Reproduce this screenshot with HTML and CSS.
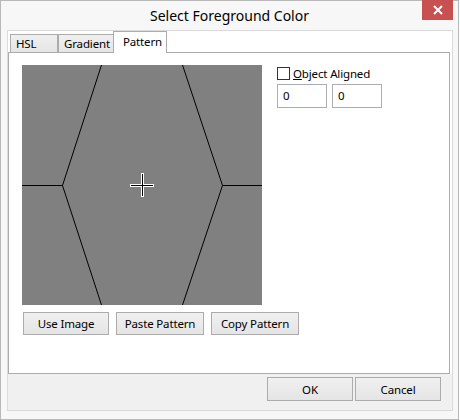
FILE: index.html
```html
<!DOCTYPE html>
<html>
<head>
<meta charset="utf-8">
<link rel="stylesheet" href="styles.css">
</head>
<body>
<div class="window">
  <div class="titlebar">
    <div class="title">Select Foreground Color</div>
    <div class="close">
      <svg width="10" height="10" viewBox="0 0 10 10"><path d="M1 1 L9 9 M9 1 L1 9" stroke="#fff" stroke-width="2" fill="none"/></svg>
    </div>
  </div>
  <div class="client">
    <div class="tabarea">
      <div class="tabs">
        <div class="tab tab-hsl">HSL</div>
        <div class="tab tab-gradient">Gradient</div>
        <div class="tab tab-active">Pattern</div>
      </div>
      <div class="panel">
        <div class="mainrow">
          <div class="canvas">
            <svg width="240" height="240" viewBox="0 0 240 240">
              <rect width="240" height="240" fill="#808080"/>
              <g stroke="#000" stroke-width="1" fill="none">
                <path d="M0 120.5 H40.5 L79.5 0 M40.5 120.5 L79.5 240 M160.5 0 L200.5 120.5 H240 M200.5 120.5 L160.5 240"/>
              </g>
              <g>
                <rect x="108" y="119" width="24" height="3" fill="#fff"/>
                <rect x="119" y="108" width="3" height="24" fill="#fff"/>
                <rect x="109" y="120" width="22" height="1" fill="#000"/>
                <rect x="120" y="109" width="1" height="22" fill="#000"/>
              </g>
            </svg>
          </div>
          <div class="side">
            <label class="check"><span class="box"></span><span class="lbl"><u>O</u>bject Aligned</span></label>
            <div class="inputs">
              <div class="field">0</div>
              <div class="field">0</div>
            </div>
          </div>
        </div>
        <div class="btnrow">
          <div class="btn btn-use">Use Image</div>
          <div class="btn btn-pat">Paste Pattern</div>
          <div class="btn btn-pat">Copy Pattern</div>
        </div>
      </div>
    </div>
    <div class="footer">
      <div class="btn btn-dlg">OK</div>
      <div class="btn btn-dlg">Cancel</div>
    </div>
  </div>
</div>
</body>
</html>
```

FILE: styles.css
```css
html, body {
  margin: 0;
  padding: 0;
  background: #ffffff;
}
body {
  font-family: "Segoe UI", "Noto Sans", sans-serif;
  font-size: 11.5px;
  letter-spacing: -0.15px;
  color: #000;
}
.window {
  width: 459px;
  height: 420px;
  box-sizing: border-box;
  border: 1px solid #b9b9b9;
  background: #f7f7f7;
  display: flex;
  flex-direction: column;
}
.titlebar {
  height: 29px;
  display: grid;
  grid-template-columns: 1fr auto 1fr;
  align-items: start;
}
.title {
  grid-column: 2;
  font-size: 14px;
  letter-spacing: 0;
  line-height: 29px;
  color: #000;
}
.close {
  grid-column: 3;
  justify-self: end;
  width: 31px;
  height: 20px;
  margin-right: 5px;
  margin-top: -1px;
  background: #c75050;
  display: flex;
  align-items: center;
  justify-content: center;
}
.client {
  margin-left: 6px;
  width: 446px;
  height: 381px;
  box-sizing: border-box;
  border: 1px solid #dadada;
  background: #f0f0f0;
  display: flex;
  flex-direction: column;
}
.tabarea {
  background: #ffffff;
  padding-right: 2px;
}
.tabs {
  height: 21px;
  display: flex;
  align-items: flex-end;
  padding-left: 2px;
}
.tab {
  height: 18px;
  box-sizing: border-box;
  border: 1px solid #acacac;
  border-bottom: none;
  background: linear-gradient(#f0f0f0, #e5e5e5);
  padding-left: 5px;
  line-height: 17px;
}
.tab-hsl { width: 48px; }
.tab-gradient { width: 55px; border-right: none; }
.tab-active {
  width: 54px;
  height: 22px;
  margin-bottom: -1px;
  background: #ffffff;
  position: relative;
  z-index: 1;
  padding-left: 9px;
  line-height: 19px;
}
.panel {
  height: 322px;
  box-sizing: border-box;
  border: 1px solid #acacac;
  background: #ffffff;
  padding: 12px 0 0 13px;
}
.mainrow {
  display: flex;
  gap: 15px;
}
.canvas {
  width: 240px;
  height: 240px;
}
.canvas svg { display: block; }
.side {
  display: flex;
  flex-direction: column;
}
.check {
  display: flex;
  align-items: center;
  height: 17px;
  margin-top: 0;
}
.box {
  width: 13px;
  height: 13px;
  box-sizing: border-box;
  border: 1px solid #333;
  background: #fff;
  margin-right: 3px;
}
.lbl { line-height: 17px; }
.inputs {
  display: flex;
  gap: 5px;
  margin-top: 2px;
}
.field {
  width: 50px;
  height: 24px;
  box-sizing: border-box;
  border: 1px solid #abadb3;
  padding-left: 5px;
  line-height: 21px;
  color: #000;
}
.btnrow {
  display: flex;
  gap: 7px;
  margin-top: 7px;
  padding-left: 1px;
}
.btn {
  height: 23px;
  box-sizing: border-box;
  border: 1px solid #acacac;
  background: linear-gradient(#f0f0f0, #e5e5e5);
  display: flex;
  align-items: center;
  justify-content: center;
}
.btn-use { width: 86px; }
.btn-pat { width: 88px; }
.footer {
  display: flex;
  justify-content: flex-end;
  gap: 2px;
  padding: 3px 11px 0 0;
}
.btn-dlg {
  width: 86px;
  height: 24px;
}
```
